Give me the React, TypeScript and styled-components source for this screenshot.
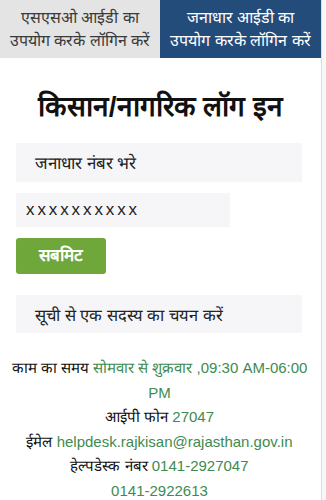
import React from "react";
import styled, { createGlobalStyle } from "styled-components";

const Global = createGlobalStyle`
  html, body { margin: 0; padding: 0; background: #fff; }
  body { font-family: "Liberation Sans", Arial, sans-serif; color: #111; }
  * { box-sizing: border-box; }
`;

const Page = styled.div`
  width: 326px;
  height: 500px;
  overflow: hidden;
  display: flex;
`;

const Main = styled.div`
  width: 322px;
  border-right: 1px solid #dcdcdc;
  display: flex;
  flex-direction: column;
`;

const Gutter = styled.div`
  flex: 1;
  background: #f7f7f7;
`;

const Tabs = styled.div`
  display: grid;
  grid-template-columns: 160px 1fr;
  height: 58px;
  flex-shrink: 0;
`;

const Tab = styled.div<{ $active?: boolean }>`
  background: ${(p) => (p.$active ? "#234c7b" : "#e4e4e4")};
  color: ${(p) => (p.$active ? "#ffffff" : "#3a3a3a")};
  font-size: 16px;
  line-height: 23px;
  text-align: center;
  display: flex;
  align-items: center;
  justify-content: center;
  padding-bottom: 1px;
  white-space: nowrap;
`;

const Title = styled.h1`
  margin: 0;
  padding-top: 34px;
  height: 85px;
  flex-shrink: 0;
  text-align: center;
  font-size: 28px;
  font-weight: bold;
  line-height: 30px;
  color: #111;
`;

const Form = styled.div`
  padding: 0 20px 0 16px;
  display: flex;
  flex-direction: column;
  align-items: flex-start;
`;

const Field = styled.div<{ $w: number; $h: number; $mono?: boolean; $fs?: number }>`
  width: ${(p) => p.$w}px;
  height: ${(p) => p.$h}px;
  flex-shrink: 0;
  background: #f6f6f8;
  display: flex;
  align-items: center;
  padding-left: ${(p) => (p.$mono ? 10 : 19)}px;
  font-size: ${(p) => p.$fs ?? 17}px;
  letter-spacing: ${(p) => (p.$mono ? "2.9px" : "0")};
  color: #222;
`;

const Gap = styled.div<{ $h: number }>`
  height: ${(p) => p.$h}px;
  flex-shrink: 0;
`;

const Button = styled.button`
  margin-top: 11px;
  width: 90px;
  height: 36px;
  flex-shrink: 0;
  border: none;
  border-radius: 3px;
  background: #6fa73b;
  color: #fff;
  font-weight: bold;
  font-size: 17px;
  font-family: inherit;
  padding: 0 0 4px 0;
`;

const Footer = styled.div`
  margin-top: 23px;
  text-align: center;
  font-size: 15px;
  line-height: 24.5px;
  color: #111;
  padding-right: 2px;
  flex-shrink: 0;
`;

const G = styled.span`
  color: #3e8b50;
`;

export default function App() {
  return (
    <Page>
      <Global />
      <Main>
        <Tabs>
          <Tab>
            एसएसओ आईडी का
            <br />
            उपयोग करके लॉगिन करें
          </Tab>
          <Tab $active>
            जनाधार आईडी का
            <br />
            उपयोग करके लॉगिन करें
          </Tab>
        </Tabs>
        <Title>किसान/नागरिक लॉग इन</Title>
        <Form>
          <Field $w={286} $h={39}>जनाधार नंबर भरे</Field>
          <Gap $h={11} />
          <Field $w={214} $h={34} $mono>xxxxxxxxxx</Field>
          <Button>सबमिट</Button>
          <Gap $h={21} />
          <Field $w={286} $h={38} $fs={16.5}>सूची से एक सदस्य का चयन करें</Field>
        </Form>
        <Footer>
          काम का समय <G>सोमवार से शुक्रवार ,09:30 AM-06:00 PM</G>
          <br />
          आईपी फोन <G>27047</G>
          <br />
          ईमेल <G>helpdesk.rajkisan@rajasthan.gov.in</G>
          <br />
          हेल्पडेस्क नंबर <G>0141-2927047</G>
          <br />
          <G>0141-2922613</G>
        </Footer>
      </Main>
      <Gutter />
    </Page>
  );
}
